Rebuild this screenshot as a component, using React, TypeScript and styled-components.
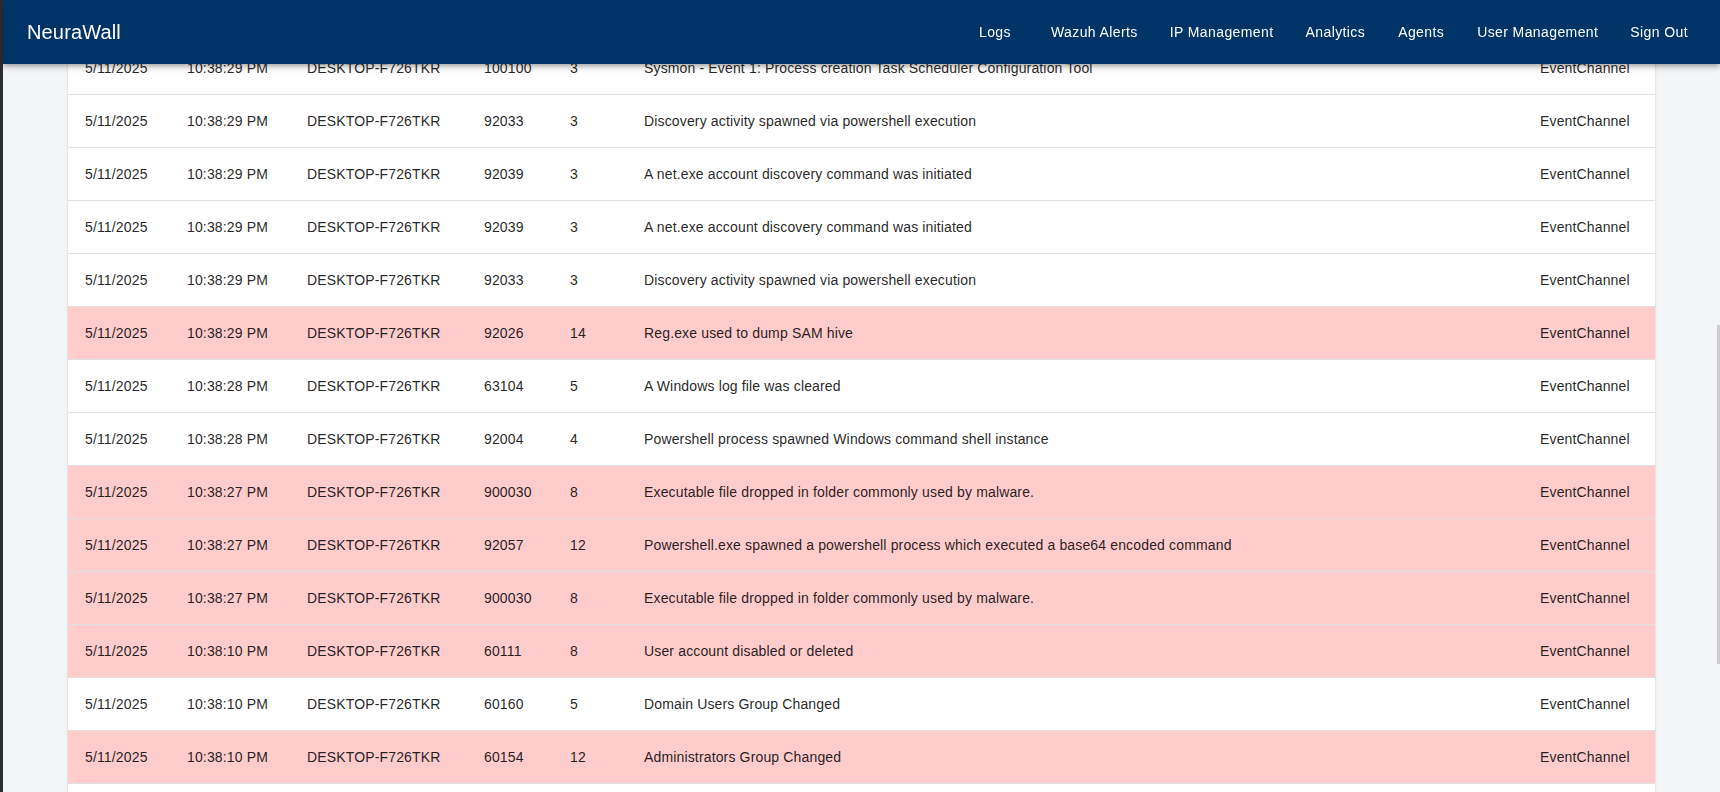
import React from 'react';
import styled, { createGlobalStyle } from 'styled-components';

const GlobalStyle = createGlobalStyle`
  html, body {
    margin: 0;
    padding: 0;
    overflow: hidden;
    height: 100%;
  }
  body {
    background: #f4f5f7;
    border-left: 3px solid #2e2e2e;
    font-family: "Liberation Sans", Arial, Helvetica, sans-serif;
    color: rgba(0, 0, 0, 0.87);
    box-sizing: border-box;
  }
  *, *::before, *::after {
    box-sizing: inherit;
  }
`;

const AppBar = styled.header`
  position: fixed;
  top: 0;
  left: 3px;
  right: 0;
  z-index: 10;
  height: 64px;
  background: #003366;
  color: #fff;
  box-shadow: 0px 2px 4px -1px rgba(0, 0, 0, 0.2), 0px 4px 5px 0px rgba(0, 0, 0, 0.14),
    0px 1px 10px 0px rgba(0, 0, 0, 0.12);
`;

const Toolbar = styled.nav`
  display: flex;
  align-items: center;
  height: 100%;
  padding: 0 24px;
`;

const Brand = styled.div`
  flex-grow: 1;
  font-size: 20px;
  font-weight: 400;
  letter-spacing: 0.15px;
  line-height: 1.6;
`;

const NavGroup = styled.div`
  display: flex;
  align-items: center;
`;

const NavButton = styled.button`
  min-width: 64px;
  margin-left: 16px;
  padding: 6px 8px;
  border: 0;
  border-radius: 4px;
  background: transparent;
  color: inherit;
  font-family: inherit;
  font-size: 14px;
  font-weight: 400;
  letter-spacing: 0.4px;
  line-height: 1.75;
  cursor: pointer;

  &:first-child {
    margin-left: 0;
  }

  &:hover {
    background: rgba(255, 255, 255, 0.08);
  }
`;

const Main = styled.main`
  padding: 42px 65px 0;
`;

const Paper = styled.div`
  background: #fff;
  border-radius: 4px;
  overflow: hidden;
  padding-bottom: 24px;
  box-shadow: 0px 2px 1px -1px rgba(0, 0, 0, 0.2), 0px 1px 1px 0px rgba(0, 0, 0, 0.14),
    0px 1px 3px 0px rgba(0, 0, 0, 0.12);
`;

const Table = styled.table`
  width: 100%;
  border-collapse: collapse;
  table-layout: fixed;
`;

const Row = styled.tr<{ $alert: boolean }>`
  background: ${({ $alert }) => ($alert ? '#ffcccc' : '#fff')};
`;

const Cell = styled.td`
  padding: 16px 16px 16px 17px;
  font-size: 14px;
  line-height: 20px;
  letter-spacing: 0.15px;
  border-bottom: 1px solid #e0e0e0;
  white-space: nowrap;

  &:last-child {
    padding-right: 24px;
  }
`;

const ScrollThumb = styled.div`
  position: fixed;
  right: 0;
  top: 325px;
  width: 3px;
  height: 339px;
  background: #cdcdd1;
  z-index: 20;
`;

type Alert = {
  time: string;
  rule: string;
  level: number;
  description: string;
};

const alerts: Alert[] = [
  { time: '10:38:29 PM', rule: '100100', level: 3, description: 'Sysmon - Event 1: Process creation Task Scheduler Configuration Tool' },
  { time: '10:38:29 PM', rule: '92033', level: 3, description: 'Discovery activity spawned via powershell execution' },
  { time: '10:38:29 PM', rule: '92039', level: 3, description: 'A net.exe account discovery command was initiated' },
  { time: '10:38:29 PM', rule: '92039', level: 3, description: 'A net.exe account discovery command was initiated' },
  { time: '10:38:29 PM', rule: '92033', level: 3, description: 'Discovery activity spawned via powershell execution' },
  { time: '10:38:29 PM', rule: '92026', level: 14, description: 'Reg.exe used to dump SAM hive' },
  { time: '10:38:28 PM', rule: '63104', level: 5, description: 'A Windows log file was cleared' },
  { time: '10:38:28 PM', rule: '92004', level: 4, description: 'Powershell process spawned Windows command shell instance' },
  { time: '10:38:27 PM', rule: '900030', level: 8, description: 'Executable file dropped in folder commonly used by malware.' },
  { time: '10:38:27 PM', rule: '92057', level: 12, description: 'Powershell.exe spawned a powershell process which executed a base64 encoded command' },
  { time: '10:38:27 PM', rule: '900030', level: 8, description: 'Executable file dropped in folder commonly used by malware.' },
  { time: '10:38:10 PM', rule: '60111', level: 8, description: 'User account disabled or deleted' },
  { time: '10:38:10 PM', rule: '60160', level: 5, description: 'Domain Users Group Changed' },
  { time: '10:38:10 PM', rule: '60154', level: 12, description: 'Administrators Group Changed' },
];

const navItems = ['Logs', 'Wazuh Alerts', 'IP Management', 'Analytics', 'Agents', 'User Management', 'Sign Out'];

// column widths measured against the 1587px wide card
const columns = [102, 120, 177, 86, 74, undefined, 132];

const App: React.FC = () => {
  return (
    <>
      <GlobalStyle />
      <AppBar>
        <Toolbar>
          <Brand>NeuraWall</Brand>
          <NavGroup>
            {navItems.map((item) => (
              <NavButton key={item}>{item}</NavButton>
            ))}
          </NavGroup>
        </Toolbar>
      </AppBar>
      <Main>
        <Paper>
          <Table>
            <colgroup>
              {columns.map((w, i) => (
                <col key={i} style={w ? { width: w } : undefined} />
              ))}
            </colgroup>
            <tbody>
              {alerts.map((a, i) => (
                <Row key={i} $alert={a.level >= 7}>
                  <Cell>5/11/2025</Cell>
                  <Cell>{a.time}</Cell>
                  <Cell>DESKTOP-F726TKR</Cell>
                  <Cell>{a.rule}</Cell>
                  <Cell>{a.level}</Cell>
                  <Cell>{a.description}</Cell>
                  <Cell>EventChannel</Cell>
                </Row>
              ))}
            </tbody>
          </Table>
        </Paper>
      </Main>
      <ScrollThumb />
    </>
  );
};

export default App;
